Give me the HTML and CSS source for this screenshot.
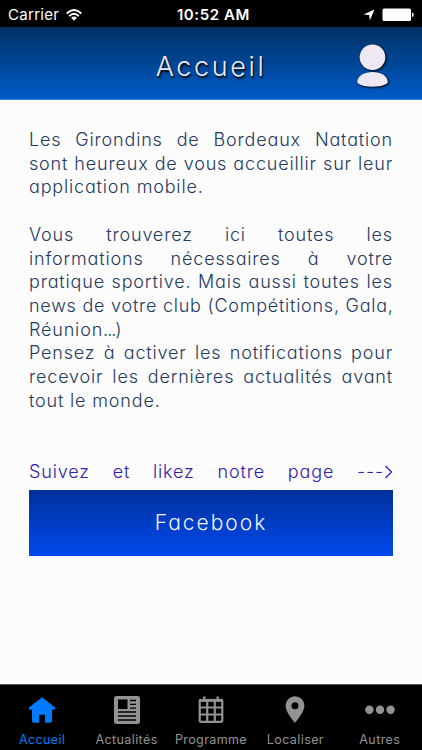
FILE: index.html
```html
<!DOCTYPE html>
<html lang="fr">
<head>
<meta charset="utf-8">
<meta name="viewport" content="width=device-width, initial-scale=1">
<title>Accueil</title>
<link rel="stylesheet" href="styles.css">
</head>
<body>
<div class="status">
  <div class="status-left"><span class="carrier">Carrier</span>
    <svg width="16" height="12" viewBox="0 0 16 12" fill="none" stroke="#fff" stroke-width="2"><path d="M.7 4.5Q8-2.4 15.3 4.5M3.2 7.1Q8 2.5 12.8 7.1"/><path d="M5.1 8.7Q8 6.3 10.9 8.7L8 11.8Z" fill="#fff" stroke="none"/></svg>
  </div>
  <span class="time">10:52 AM</span>
  <div class="status-right">
    <svg width="12" height="12" viewBox="0 0 12 12" fill="#fff"><path d="M11.5.5 6.8 11.5 6.2 6.1.5 5.4Z"/></svg>
    <svg width="32" height="14" viewBox="0 0 32 14" fill="#fff"><rect x=".5" y=".5" width="28.5" height="12.5" rx="1.5"/><path d="M30 4.5q1.7 0 1.7 2.2T30 9Z"/></svg>
  </div>
</div>
<header class="header">
  <h1 class="title">Accueil</h1>
  <svg class="avatar" width="36" height="46" viewBox="0 0 36 46" fill="#eee8f3"><circle cx="17.5" cy="14.3" r="12.8"/><path d="M2.2 38.5C3 32.6 9.2 29 17.5 29S32 32.6 32.8 38.5C32.8 41.7 25.5 43.7 17.5 43.7S2.2 41.7 2.2 38.5Z"/></svg>
</header>
<main class="content">
  <p class="para"><span class="line">Les Girondins de Bordeaux Natation</span><span class="line">sont heureux de vous accueillir sur leur</span><span class="line end">application mobile.</span></p>
  <p class="para intro"><span class="line">Vous trouverez ici toutes les</span><span class="line">informations nécessaires à votre</span><span class="line">pratique sportive. Mais aussi toutes les</span><span class="line tight">news de votre club (Compétitions, Gala,</span><span class="line end">Réunion<span class="dots">...</span>)</span><span class="line">Pensez à activer les notifications pour</span><span class="line">recevoir les dernières actualités avant</span><span class="line end">tout le monde.</span></p>
  <p class="para follow"><span class="line">Suivez et likez notre page <span class="arrow">---<svg width="9" height="14" viewBox="0 0 9 14" fill="none" stroke="currentColor" stroke-width="1.3"><path d="M1.5 1 7.5 7 1.5 13"/></svg></span></span></p>
  <a class="button">Facebook</a>
</main>
<nav class="tabs">
  <a class="tab active"><svg width="30" height="30" viewBox="0 0 30 30" fill="currentColor"><path d="M15 2.2 28 12.6Q28.6 14.8 26.5 14.8H25V26Q25 27.8 23.2 27.8H18V19.8H12.2V27.8H6.8Q5 27.8 5 26V14.8H3.5Q1.4 14.8 2 12.6Z"/></svg><span>Accueil</span></a>
  <a class="tab"><svg width="30" height="30" viewBox="0 0 30 30"><rect x="2" y="1" width="26" height="28" rx="2.5" fill="currentColor"/><path d="M6 4.5h9.5V14H6Z" fill="#000"/><path d="M18 5.5h6M18 9.3h6M18 13.1h6M6 17h18M6 21h18M6 25h18" stroke="#000" stroke-width="1.3"/></svg><span>Actualités</span></a>
  <a class="tab"><svg width="30" height="30" viewBox="0 0 30 30" fill="none" stroke="currentColor"><rect x="3.7" y="5" width="22.6" height="21.8" rx="1.5" stroke-width="2.2"/><path d="M3 12.5h24M3 19.5h24M11.2 5v22M18.8 5v22" stroke-width="2.2"/><path d="M3.2 5.4h23.6" stroke-width="3"/><path d="M8.3 1.5v5M21.7 1.5v5" stroke-width="2.4"/></svg><span>Programme</span></a>
  <a class="tab"><svg width="30" height="30" viewBox="0 0 30 30" fill="currentColor" fill-rule="evenodd"><path d="M15 1.3a9.4 9.4 0 0 0-9.4 9.4C5.6 17.3 15 27.8 15 27.8S24.4 17.3 24.4 10.7A9.4 9.4 0 0 0 15 1.3ZM15 7.2a3.5 3.5 0 1 1 0 7 3.5 3.5 0 0 1 0-7Z"/></svg><span>Localiser</span></a>
  <a class="tab"><svg width="30" height="30" viewBox="0 0 30 30" fill="currentColor"><circle cx="4.4" cy="14.7" r="4.2"/><circle cx="15" cy="14.7" r="4.2"/><circle cx="25.6" cy="14.7" r="4.2"/></svg><span>Autres</span></a>
</nav>
</body>
</html>
```
FILE: styles.css
```css
* { box-sizing: border-box; }
body {
  margin: 0;
  height: 750px;
  display: flex;
  flex-direction: column;
  overflow: hidden;
  background: #fcfcfc;
  font-family: Inter, "Liberation Sans", sans-serif;
}
svg { display: block; flex: none; }
.status {
  height: 27px;
  padding: 2px 8px 0;
  display: grid;
  grid-template-columns: 1fr auto 1fr;
  align-items: center;
  background: #000;
  color: #fff;
  font-size: 15px;
  line-height: 25px;
}
.status-left, .status-right { display: flex; align-items: center; gap: 7px; }
.carrier { letter-spacing: .3px; }
.status-right { justify-content: flex-end; }
.time { font-weight: 600; letter-spacing: .6px; margin-left: 5px; }
.header {
  height: 73px;
  display: grid;
  grid-template-columns: 1fr auto 1fr;
  align-items: center;
  background: linear-gradient(#003164, #005bc8);
  border-bottom: 1px solid #3984d8;
}
.title {
  grid-column: 2;
  margin: 7px 0 0;
  color: #eee8f3;
  font-size: 27px;
  font-weight: 300;
  letter-spacing: 2.6px;
  line-height: 36px;
  font-feature-settings: "cv11";
  text-shadow: 1px 2px 2px #000;
}
.avatar {
  justify-self: end;
  margin: 6px 31px 0 0;
  filter: drop-shadow(1px 1px 1px #000);
}
.content {
  flex: 1;
  padding: 28px 29px 0;
  font-feature-settings: "cv11";
}
.para {
  margin: 0 0 23.7px;
  color: #243a61;
  font-size: 18px;
  font-weight: 300;
  line-height: 23.7px;
  letter-spacing: .83px;
}
.intro { margin-bottom: 47.4px; }
.line { display: block; white-space: nowrap; text-align-last: justify; }
.end { text-align-last: left; }
.tight { letter-spacing: .75px; }
.dots { letter-spacing: -1px; }
.follow { margin-bottom: 6px; color: #3020b0; }
.arrow { display: inline-flex; align-items: center; }
.button {
  display: flex;
  align-items: center;
  justify-content: center;
  height: 66px;
  background: linear-gradient(#00309a, #0049ee);
  color: #eef1ff;
  font-size: 21px;
  font-weight: 300;
  letter-spacing: 2px;
}
.tabs {
  height: 66px;
  display: grid;
  grid-template-columns: repeat(5, 1fr);
  background: #000;
  border-top: 1px solid #555;
}
.tab {
  display: flex;
  flex-direction: column;
  align-items: center;
  padding-top: 10px;
  color: #929292;
  font-size: 12.5px;
  line-height: 18px;
  letter-spacing: .4px;
}
.tab span { margin-top: 6px; }
.active { color: #007aff; }
```
